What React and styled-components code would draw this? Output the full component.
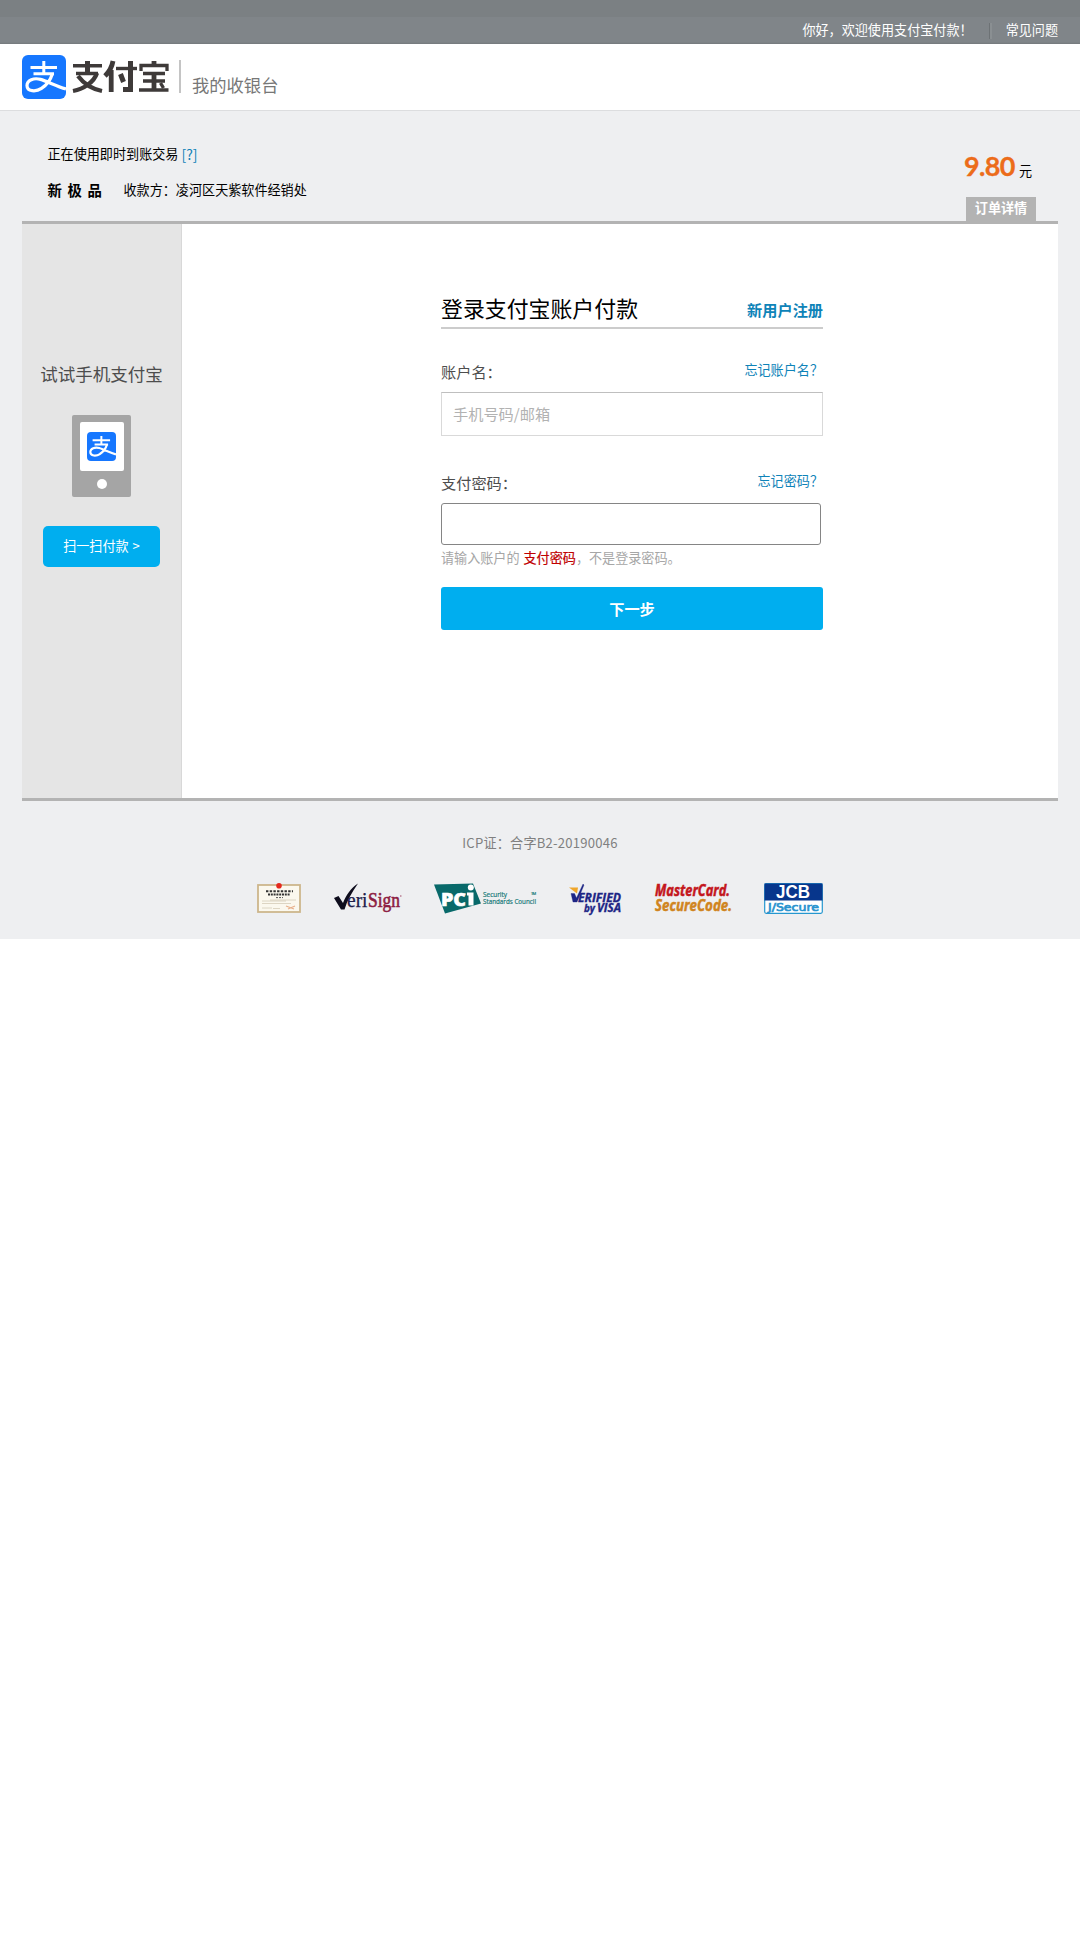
import React from "react";
import styled, { createGlobalStyle, css } from "styled-components";

const Global = createGlobalStyle`
  * { box-sizing: border-box; }
  body {
    margin: 0;
    background: #fff;
    font-family: "Noto Sans CJK SC", "Liberation Sans", sans-serif;
    font-size: 13.1px;
    line-height: 18px;
    color: #000;
  }
`;

const Page = styled.div`
  width: 1080px;
  height: 939px;
  background: #eeeff1;
  display: flex;
  flex-direction: column;
`;

const TopBar = styled.div`
  height: 44px;
  background: linear-gradient(#7b8083 0 17px, #808589 17px 42px, #74797c 44px);
  color: #fff;
  display: flex;
  justify-content: flex-end;
  align-items: flex-start;
  padding: 21px 22px 0 0;
`;

const Divider = styled.i`
  width: 3px;
  height: 16px;
  margin: 2px 14px 0 16px;
  background: #6d7275;
  border-right: 2px solid #8a8f92;
`;

const Header = styled.header`
  height: 67px;
  background: #fff;
  border-bottom: 1px solid #dcdddf;
  display: flex;
  align-items: flex-start;
  padding: 11px 22px 0;
`;

const Logo = styled.div`
  display: flex;
  gap: 6px;
`;

const HeaderRule = styled.i`
  width: 2px;
  height: 33px;
  margin: 5px 11px 0 9px;
  background: #c4c4c4;
`;

const Subtitle = styled.span`
  margin-top: 17px;
  font-size: 17.3px;
  line-height: 26px;
  color: #777;
`;

const Order = styled.section`
  height: 110px;
  margin: 0 22px;
  padding: 0 22px 0 25.5px;
  display: flex;
  justify-content: space-between;
`;

const OrderInfo = styled.div`
  padding-top: 34px;
  display: flex;
  flex-direction: column;
  gap: 18px;
`;

const Line = styled.div`
  display: flex;
  align-items: center;
  height: 18px;
  gap: ${(p) => p.$gap}px;
`;

const ProductName = styled.strong`
  font-size: 14.4px;
  letter-spacing: 5.6px;
  width: 61px;
  white-space: nowrap;
`;

const Price = styled.div`
  display: flex;
  flex-direction: column;
  align-items: flex-end;
  padding-top: 41px;
`;

const Amount = styled.div`
  display: flex;
  align-items: baseline;
  gap: 4px;
  height: 45px;
  line-height: 28px;
  padding-right: 4px;
`;

const Sum = styled.strong`
  font-family: Lato, sans-serif;
  font-weight: 700;
  font-size: 27px;
  letter-spacing: -0.6px;
  color: #ec6c1a;
  -webkit-text-stroke: 0.3px #ec6c1a;
`;

const Tab = styled.div`
  width: 70px;
  height: 24px;
  background: #b3b3b3;
  color: #fff;
  font-weight: 700;
  text-align: center;
  line-height: 22px;
`;

const Panel = styled.main`
  height: 580px;
  margin: 0 22px;
  border-top: 3px solid #b3b3b3;
  border-bottom: 3px solid #b3b3b3;
  background: #fff;
  display: flex;
`;

const Aside = styled.aside`
  width: 160px;
  background: #e5e5e5;
  border-right: 1px solid #d8d8d8;
  display: flex;
  flex-direction: column;
  align-items: center;
  padding-top: 137px;
`;

const AsideTitle = styled.div`
  font-size: 17.5px;
  line-height: 26px;
  color: #4d4d4d;
`;

const Phone = styled.div`
  width: 59px;
  height: 82px;
  margin-top: 28px;
  border-radius: 2px;
  background: #a5a5a5;
  display: flex;
  flex-direction: column;
  align-items: center;
  padding-top: 7px;
`;

const Screen = styled.div`
  width: 44px;
  height: 49px;
  border-radius: 2px;
  background: #fff;
  display: flex;
  align-items: center;
  justify-content: center;
`;

const HomeKey = styled.i`
  width: 10px;
  height: 10px;
  margin-top: 8px;
  border-radius: 50%;
  background: #fff;
`;

const buttonBase = css`
  border: 0;
  padding: 0 0 2px;
  font-family: inherit;
  background: #00aeef;
  color: #fff;
`;

const ScanButton = styled.button`
  ${buttonBase}
  width: 117px;
  height: 41px;
  margin-top: 29px;
  border-radius: 5px;
  font-size: 13.1px;
  word-spacing: 1px;
`;

const Form = styled.form`
  width: 382px;
  margin: 67px 0 0 259px;
  display: flex;
  flex-direction: column;
`;

const FormHead = styled.div`
  height: 38px;
  border-bottom: 2px solid #ccc;
  display: flex;
  justify-content: space-between;
`;

const Title = styled.h1`
  margin: 0;
  font-size: 21.9px;
  line-height: 34px;
  font-weight: 400;
`;

const Link = styled.a`
  color: #0e83b8;
  font-size: ${(p) => p.$size || 13.1}px;
  font-weight: ${(p) => (p.$bold ? 700 : 400)};
  line-height: ${(p) => p.$lh || 18}px;
`;

const LabelRow = styled.div`
  display: flex;
  justify-content: space-between;
  align-items: flex-start;
  height: 31px;
  margin-top: ${(p) => p.$top}px;
`;

const Label = styled.label`
  font-size: 15.2px;
  line-height: 20px;
  color: #4d4d4d;
`;

const Input = styled.input`
  display: block;
  width: ${(p) => p.$w}px;
  height: ${(p) => p.$h}px;
  padding: 0 11px 3px;
  border: 1px solid ${(p) => p.$line};
  border-top-color: ${(p) => p.$topLine || p.$line};
  border-radius: ${(p) => p.$r || 0}px;
  background: #fff;
  font-family: inherit;
  font-size: 15.2px;
  outline: none;
  &::placeholder { color: #b2b2b2; opacity: 1; }
`;

const Hint = styled.p`
  margin: 3px 0 0;
  color: #a6a6a6;
  line-height: 20px;
  b {
    margin-left: 1px;
    color: #c00000;
    font-weight: 400;
    -webkit-text-stroke: 0.2px #c00000;
  }
`;

const Submit = styled.button`
  ${buttonBase}
  width: 382px;
  height: 43px;
  margin-top: 19px;
  border-radius: 3px;
  font-size: 15.2px;
  font-weight: 700;
`;

const Footer = styled.footer`
  display: flex;
  flex-direction: column;
  align-items: center;
  padding-top: 32px;
  color: #808080;
`;

const Icp = styled.div`
  line-height: 20px;
  letter-spacing: 0.22px;
`;

const Badges = styled.div`
  display: flex;
  align-items: flex-start;
  gap: 32px;
  margin-top: 30px;
  svg { overflow: visible; flex: none; }
`;

const Glyph = ({ size }) => (
  <svg width={size} height={size} viewBox="0 0 44 44">
    <rect width="44" height="44" rx="6" fill="#1677ff" />
    <path d="M8.5 12.6H35M21.8 6V19M11.5 18.8H32" fill="none" stroke="#fff" strokeWidth="3" />
    <path
      d="M30.4 18.8C28.5 25 25 30 19.5 33.4C14 37 5 36.8 5 30.5C5 25 12 22.6 18.5 24.4C25 26.2 34 31 44 34"
      fill="none"
      stroke="#fff"
      strokeWidth="3.2"
    />
  </svg>
);

const Wordmark = () => (
  <svg width="98" height="44" viewBox="0 0 98 44" fill="none" stroke="#3e3a39">
    <path strokeWidth="3.4" d="M1 10.7H30M4 18.5H26" />
    <path strokeWidth="5" d="M15.5 6V20" />
    <path strokeWidth="4.3" d="M25 18C22 27 12 34 1 36M6 21C12 29 20 34 30 36" />
    <path strokeWidth="4.8" d="M41 6C40 12 37 17 33 21M39.2 15V37" />
    <path strokeWidth="3.4" d="M44 13.5H65" />
    <path strokeWidth="5" d="M58.5 6V34.5H51M48.5 19L51.5 27" />
    <path strokeWidth="3.3" d="M69 16V10.5H95V16M71 18.5H93M71 26H93M67 35H96.5" />
    <path strokeWidth="4.8" d="M82 6V10M82 18V35" />
    <path strokeWidth="3.4" d="M88.5 28L91.5 33" />
  </svg>
);

const License = () => (
  <svg width="45" height="31" viewBox="0 0 45 31">
    <rect x="1" y="2" width="42" height="27" fill="#fbf8ee" stroke="#cdb68c" strokeWidth="1.8" />
    <circle cx="22" cy="2.8" r="2.8" fill="#e5281c" />
    <path d="M9 8.3H36" stroke="#333" strokeWidth="2" strokeDasharray="2.4 1.3" />
    <path d="M11 11.6H33" stroke="#333" strokeWidth="2" strokeDasharray="2 .8" />
    <path d="M19 14.6H26" stroke="#555" strokeWidth="1" strokeDasharray="2 1" />
    <path d="M5 18H29M5 20.5H34M13 17H39M5 25H15M16 25.5H23" stroke="#d5cbb8" strokeWidth=".8" />
    <path d="M29 23L37 26M31 26L38 23" stroke="#e8b08c" strokeWidth="1.2" />
  </svg>
);

const VeriSign = () => (
  <svg width="68" height="32" viewBox="0 0 68 32">
    <path d="M0 15L4.5 13L9 20C12 12 17 5 24 0.5C18 9 13 18 10.5 26.5L7 26.5Z" fill="#0d0c1c" />
    <text x="13" y="24" fontFamily="Liberation Serif" fontSize="20" fill="#20204a" stroke="#20204a" strokeWidth=".25" textLength="20.5" lengthAdjust="spacingAndGlyphs">eri</text>
    <text x="34" y="24" fontFamily="Liberation Serif" fontSize="20" fill="#8d1c42" stroke="#8d1c42" strokeWidth=".6" textLength="32" lengthAdjust="spacingAndGlyphs">Sign</text>
    <path d="M66.2 13H67.4" stroke="#8d1c42" strokeWidth="1" />
  </svg>
);

const Pci = () => (
  <svg width="103" height="32" viewBox="0 0 103 32">
    <path d="M0 1.5L39 0.5L47 20.5L11 30.5Z" fill="#08696a" />
    <text x="7" y="22.5" fontFamily="Open Sans" fontWeight="800" fontSize="18" fill="#fff" stroke="#fff" strokeWidth=".6" textLength="25" lengthAdjust="spacingAndGlyphs">PC</text>
    <path d="M33 9.5H39.5V22.5H34.5V12.5H33Z" fill="#fff" />
    <circle cx="36.8" cy="4.6" r="3" fill="#fff" />
    <g fontFamily="Open Sans" fontSize="6.8" fill="#187a79" stroke="#187a79" strokeWidth=".2">
      <text x="49" y="13.5" textLength="24" lengthAdjust="spacingAndGlyphs">Security</text>
      <text x="49" y="21" textLength="53" lengthAdjust="spacingAndGlyphs">Standards Council</text>
      <text x="97" y="11.5" fontSize="4" textLength="5">TM</text>
    </g>
  </svg>
);

const Visa = () => (
  <svg width="54" height="32" viewBox="0 0 54 32" fontFamily="Open Sans" fontWeight="700" fontStyle="italic" fill="#1d2585" stroke="#1d2585" strokeWidth=".35">
    <path d="M0 4.5H9L8 10.5Z" fill="#efa62b" stroke="none" />
    <path d="M2 10.5H5.5L7.5 15L14 1L15 2L8 19H4Z" />
    <text x="9" y="18.5" fontSize="12.5" textLength="43" lengthAdjust="spacingAndGlyphs">ERIFIED</text>
    <text x="15" y="28.8" fontSize="10.5" textLength="11" lengthAdjust="spacingAndGlyphs">by</text>
    <text x="28" y="28.8" fontSize="12" textLength="24" lengthAdjust="spacingAndGlyphs">VISA</text>
  </svg>
);

const MasterCard = () => (
  <svg width="77" height="32" viewBox="0 0 77 32" fontFamily="Open Sans" fontWeight="700" fontStyle="italic" fontSize="16">
    <text x="0" y="13.2" fill="#c4161c" stroke="#c4161c" strokeWidth=".5" textLength="75" lengthAdjust="spacingAndGlyphs">MasterCard.</text>
    <text x="0" y="28.2" fill="#d08420" stroke="#d08420" strokeWidth=".5" textLength="77" lengthAdjust="spacingAndGlyphs">SecureCode.</text>
  </svg>
);

const Jcb = () => (
  <svg width="59" height="31" viewBox="0 0 59 31">
    <rect x=".7" y=".7" width="57.6" height="29.6" rx="1.5" fill="#fff" stroke="#2697cf" strokeWidth="1.2" />
    <path d="M.5 .5H58.5V17.5H.5Z" fill="#07368c" />
    <text x="12" y="15.3" fontFamily="Liberation Sans" fontWeight="700" fontSize="18" fill="#fff" textLength="34" lengthAdjust="spacingAndGlyphs">JCB</text>
    <text x="4" y="27.5" fontFamily="DejaVu Sans" fontSize="11" fill="#2a94cf" stroke="#2a94cf" strokeWidth=".7" textLength="51" lengthAdjust="spacingAndGlyphs">J/Secure</text>
  </svg>
);

export default function App() {
  return (
    <>
      <Global />
      <Page>
        <TopBar>
          <span>你好，欢迎使用支付宝付款！</span>
          <Divider />
          <span>常见问题</span>
        </TopBar>
        <Header>
          <Logo>
            <Glyph size={44} />
            <Wordmark />
          </Logo>
          <HeaderRule />
          <Subtitle>我的收银台</Subtitle>
        </Header>
        <Order>
          <OrderInfo>
            <Line $gap={3}>
              <span>正在使用即时到账交易</span>
              <Link $size={14}>[?]</Link>
            </Line>
            <Line $gap={15}>
              <ProductName>新极品</ProductName>
              <span>收款方：凌河区天紫软件经销处</span>
            </Line>
          </OrderInfo>
          <Price>
            <Amount>
              <Sum>9.80</Sum>
              <span>元</span>
            </Amount>
            <Tab>订单详情</Tab>
          </Price>
        </Order>
        <Panel>
          <Aside>
            <AsideTitle>试试手机支付宝</AsideTitle>
            <Phone>
              <Screen>
                <Glyph size={29} />
              </Screen>
              <HomeKey />
            </Phone>
            <ScanButton type="button">扫一扫付款 &gt;</ScanButton>
          </Aside>
          <Form>
            <FormHead>
              <Title>登录支付宝账户付款</Title>
              <Link $size={15.2} $bold $lh={37}>新用户注册</Link>
            </FormHead>
            <LabelRow $top={32}>
              <Label>账户名：</Label>
              <Link>忘记账户名？</Link>
            </LabelRow>
            <Input $w={382} $h={44} $line="#d9d9d9" $topLine="#bfbfbf" placeholder="手机号码/邮箱" />
            <LabelRow $top={36}>
              <Label>支付密码：</Label>
              <Link>忘记密码？</Link>
            </LabelRow>
            <Input $w={380} $h={42} $line="#858585" $r={3} type="password" />
            <Hint>
              请输入账户的 <b>支付密码</b>，不是登录密码。
            </Hint>
            <Submit type="button">下一步</Submit>
          </Form>
        </Panel>
        <Footer>
          <Icp>ICP证：合字B2-20190046</Icp>
          <Badges>
            <License />
            <VeriSign />
            <Pci />
            <Visa />
            <MasterCard />
            <Jcb />
          </Badges>
        </Footer>
      </Page>
    </>
  );
}
